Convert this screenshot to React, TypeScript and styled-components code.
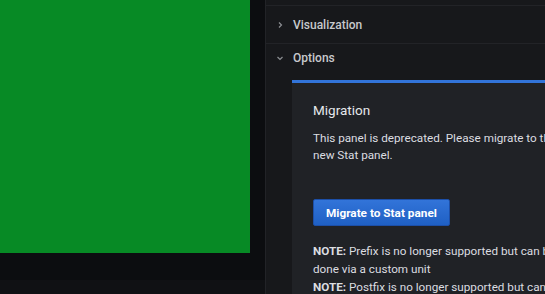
import React from 'react';
import styled, {createGlobalStyle} from "styled-components";

const GlobalStyle = createGlobalStyle`
  html, body {
    margin: 0;
    padding: 0;
    background: #0c0d10;
    font-family: Roboto, "Liberation Sans", Arial, sans-serif;
  }
`

const Page = styled.div`
  display: flex;
  width: 545px;
  height: 294px;
  overflow: hidden;
`

const LeftColumn = styled.div`
  display: flex;
  flex-direction: column;
  width: 265px;
  flex-shrink: 0;
`

const GreenPanel = styled.div`
  width: 250px;
  height: 253px;
  background: #078a25;
`

const DarkGap = styled.div`
  flex: 1;
`

const BottomStrip = styled.div`
  height: 14px;
  background: #101114;
`

const OptionsPane = styled.div`
  flex: 1;
  min-width: 0;
  display: flex;
  flex-direction: column;
  background: #17181b;
  border-left: 1px solid #222327;
  overflow: hidden;
`

const TopRow = styled.div`
  height: 5px;
  border-bottom: 1px solid #222327;
  flex-shrink: 0;
`

const SectionHeader = styled.div<{ $height: number; $border?: boolean }>`
  display: flex;
  align-items: center;
  gap: 9px;
  height: ${p => p.$height}px;
  padding-left: 10px;
  flex-shrink: 0;
  color: #c7c9cc;
  font-size: 12px;
  font-weight: 500;
  border-bottom: ${p => (p.$border ? '1px solid #222327' : 'none')};
`

const Chevron = styled.svg`
  width: 8px;
  height: 8px;
  flex-shrink: 0;
  color: #8d8f93;
`

const Content = styled.div`
  padding: 9px 0 0 26px;
`

const MigrationBox = styled.div`
  width: 300px;
  padding: 17px 21px 0;
  background: #202226;
  border-top: 3px solid #3274d9;
  color: #dcdde0;
`

const Title = styled.div`
  font-size: 13.5px;
  line-height: 20px;
  color: #e6e8eb;
  margin-bottom: 10px;
`

const Paragraph = styled.p`
  margin: 0;
  width: 258px;
  font-size: 11.7px;
  line-height: 17px;
`

const PrimaryButton = styled.button`
  display: block;
  margin: 35px 0 16px;
  height: 27px;
  padding: 0 12px;
  border: 1px solid #1c4fa8;
  border-radius: 2px;
  background: linear-gradient(180deg, #3274d9, #1f60c4);
  color: #fff;
  font-family: inherit;
  font-size: 11.8px;
  font-weight: 700;
`

const Notes = styled.div`
  width: 258px;
  font-size: 11.7px;
  line-height: 18px;

  strong {
    font-weight: 700;
  }
`

const RightChevron = () => (
    <Chevron viewBox="0 0 8 8">
        <polyline points="3,1.5 5.5,4 3,6.5" fill="none" stroke="currentColor" strokeWidth="1.2"/>
    </Chevron>
)

const DownChevron = () => (
    <Chevron viewBox="0 0 8 8">
        <polyline points="1.5,3 4,5.5 6.5,3" fill="none" stroke="currentColor" strokeWidth="1.2"/>
    </Chevron>
)

export default function App() {
    return (
        <>
            <GlobalStyle/>
            <Page>
                <LeftColumn>
                    <GreenPanel/>
                    <DarkGap/>
                    <BottomStrip/>
                </LeftColumn>

                <OptionsPane>
                    <TopRow/>
                    <SectionHeader $height={37} $border>
                        <RightChevron/>
                        Visualization
                    </SectionHeader>
                    <SectionHeader $height={27}>
                        <DownChevron/>
                        Options
                    </SectionHeader>

                    <Content>
                        <MigrationBox>
                            <Title>Migration</Title>
                            <Paragraph>
                                This panel is deprecated. Please migrate to the new Stat panel.
                            </Paragraph>
                            <PrimaryButton>Migrate to Stat panel</PrimaryButton>
                            <Notes>
                                <div><strong>NOTE:</strong> Prefix is no longer supported but can be done via a custom unit</div>
                                <div><strong>NOTE:</strong> Postfix is no longer supported but can be done via a custom unit</div>
                            </Notes>
                        </MigrationBox>
                    </Content>
                </OptionsPane>
            </Page>
        </>
    );
}
